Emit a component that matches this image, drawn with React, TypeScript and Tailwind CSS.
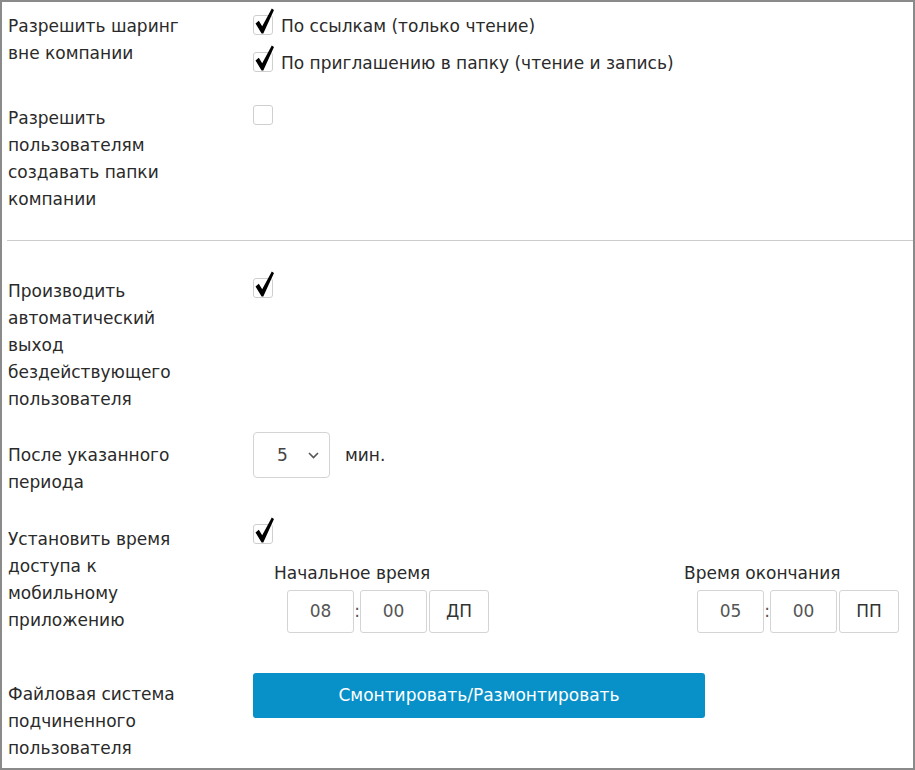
import { ReactNode } from 'react'

// Case à cocher dessinée : boîte grise + coche noire qui déborde en haut
function Check({ checked, className }: { checked?: boolean; className?: string }) {
  return (
    <span className={'relative block w-[20px] h-[20px] shrink-0 border border-[#cfcfcf] rounded-[3px] bg-white ' + (className ?? '')}>
      {checked && (
        <svg className="absolute left-[0px] top-[-8px]" width="22" height="28" viewBox="0 0 22 28">
          <path d="M1.5 15.5 L4.8 12.8 L8.2 18.2 L17.8 0.5 L20 2 L9.3 25.5 L7.6 25.5 Z" fill="#000" />
        </svg>
      )}
    </span>
  )
}

function Row({ label, className, labelClass, children }: { label: string; className?: string; labelClass?: string; children?: ReactNode }) {
  return (
    <div className={'flex ' + (className ?? '')}>
      <div className={'w-[245px] pr-[55px] shrink-0 ' + (labelClass ?? '')}>{label}</div>
      <div className="flex-1">{children}</div>
    </div>
  )
}

function TimeBox({ value, w }: { value: string; w: string }) {
  return (
    <div className={'h-[43px] flex items-center justify-center border border-[#d4d4d4] rounded-[3px] text-[#555] ' + w}>
      {value}
    </div>
  )
}

function TimeGroup({ title, h, m, ampm }: { title: string; h: string; m: string; ampm: string }) {
  return (
    <div>
      <div className="leading-[27px]">{title}</div>
      <div className="flex items-center ml-[13px] mt-[3px]">
        <TimeBox value={h} w="w-[67px]" />
        <span className="w-[6px] text-center text-[#555]">:</span>
        <TimeBox value={m} w="w-[67px]" />
        <div className="ml-[2px] h-[43px] w-[60px] flex items-center justify-center border border-[#d4d4d4] rounded-[3px] text-[#333]">
          {ampm}
        </div>
      </div>
    </div>
  )
}

export default function App() {
  return (
    <div className="w-[915px] h-[770px] border-2 border-[#8a8a8a] bg-white pt-[11px] pl-[6px] text-[17px] leading-[27px] text-[#2a2a2a] font-['DejaVu_Sans',sans-serif] overflow-hidden">

      <Row label="Разрешить шаринг вне компании">
        <div className="flex flex-col gap-[10px]">
          <div className="flex items-start gap-[8px] h-[27px]">
            <Check checked className="mt-[2px]" />
            <span>По ссылкам (только чтение)</span>
          </div>
          <div className="flex items-start gap-[8px] h-[27px]">
            <Check checked className="mt-[2px]" />
            <span>По приглашению в папку (чтение и запись)</span>
          </div>
        </div>
      </Row>

      <Row label="Разрешить пользователям создавать папки компании" className="mt-[28px]">
        <Check />
      </Row>

      <div className="mt-[27px] ml-[-1px] h-px bg-[#cccccc]" />

      <Row label="Производить автоматический выход бездействующего пользователя" className="mt-[37px]">
        <Check checked />
      </Row>

      <Row label="После указанного периода" className="mt-[19px]" labelClass="pt-[10px]">
        <div className="flex items-center gap-[15px]">
          <div className="w-[77px] h-[46px] border border-[#d4d4d4] rounded-[4px] flex items-center pl-[23px] pr-[10px] justify-between text-[#444]">
            <span>5</span>
            <svg width="11" height="7" viewBox="0 0 11 7">
              <path d="M1 1 L5.5 5.5 L10 1" fill="none" stroke="#555" strokeWidth="1.6" />
            </svg>
          </div>
          <span>мин.</span>
        </div>
      </Row>

      <Row label="Установить время доступа к мобильному приложению" className="mt-[30px]">
        <Check checked className="-mt-[2px]" />
        <div className="mt-[16px] ml-[21px] w-[625px] flex justify-between">
          <TimeGroup title="Начальное время" h="08" m="00" ampm="ДП" />
          <TimeGroup title="Время окончания" h="05" m="00" ampm="ПП" />
        </div>
      </Row>

      <Row label="Файловая система подчиненного пользователя" className="mt-[39px]" labelClass="pt-[8px]">
        <button className="w-[452px] h-[45px] rounded-[3px] bg-[#0891c9] text-white text-[17px] font-medium">
          Смонтировать/Размонтировать
        </button>
      </Row>

    </div>
  )
}
